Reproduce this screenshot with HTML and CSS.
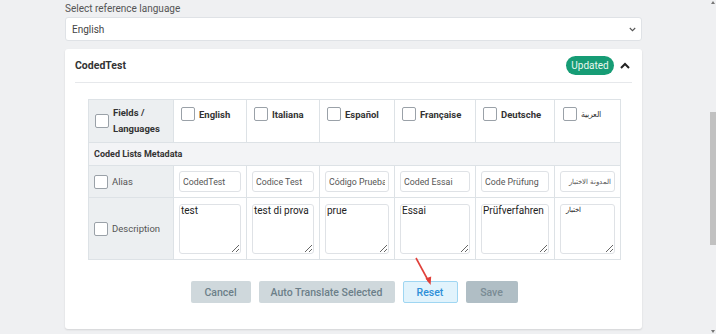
FILE: index.html
```html
<html>
<head>
<meta charset="UTF-8">
<title>Coded List Translation</title>
<link rel="stylesheet" href="styles.css">
</head>
<body>
<div class="page">
  <div class="reflabel">Select reference language</div>
  <div class="refselect">
    <span>English</span>
    <svg class="caret" width="7" height="5" viewBox="0 0 7 5"><path d="M0.8 1 L3.5 3.7 L6.2 1" fill="none" stroke="#555" stroke-width="1.1"/></svg>
  </div>

  <div class="card">
    <div class="cardhead">
      <span class="cardtitle">CodedTest</span>
      <span class="badge">Updated</span>
      <svg class="chev" width="10" height="7" viewBox="0 0 10 7"><path d="M1 6 L5 2 L9 6" fill="none" stroke="#222" stroke-width="2"/></svg>
    </div>

    <table class="grid">
      <colgroup>
        <col style="width:85px"><col style="width:73px"><col style="width:73px"><col style="width:75px"><col style="width:81px"><col style="width:79px"><col style="width:66px">
      </colgroup>
      <tr class="hrow">
        <th class="fcell first"><div class="fl"><span class="cb"></span><span>Fields /<br>Languages</span></div></th>
        <th><div class="lh"><span class="cb"></span>English</div></th>
        <th><div class="lh"><span class="cb"></span>Italiana</div></th>
        <th><div class="lh"><span class="cb"></span>Español</div></th>
        <th><div class="lh"><span class="cb"></span>Française</div></th>
        <th><div class="lh"><span class="cb"></span>Deutsche</div></th>
        <th><div class="lh ar"><span class="cb"></span>العربية</div></th>
      </tr>
      <tr class="srow">
        <td colspan="7">Coded Lists Metadata</td>
      </tr>
      <tr class="arow">
        <td class="fcell"><div class="fl"><span class="cb"></span>Alias</div></td>
        <td><input class="tin" value="CodedTest"></td>
        <td><input class="tin" value="Codice Test"></td>
        <td><input class="tin" value="Código Prueba"></td>
        <td><input class="tin" value="Coded Essai"></td>
        <td><input class="tin" value="Code Prüfung"></td>
        <td><input class="tin rtl" value="المدونة الاختبار"></td>
      </tr>
      <tr class="drow">
        <td class="fcell"><div class="fl"><span class="cb"></span>Description</div></td>
        <td><textarea class="tarea">test</textarea></td>
        <td><textarea class="tarea">test di prova</textarea></td>
        <td><textarea class="tarea">prue</textarea></td>
        <td><textarea class="tarea">Essai</textarea></td>
        <td><textarea class="tarea">Prüfverfahren</textarea></td>
        <td><textarea class="tarea ar">اختبار</textarea></td>
      </tr>
    </table>

    <div class="actions">
      <button class="btn grey">Cancel</button>
      <button class="btn grey">Auto Translate Selected</button>
      <button class="btn reset">Reset</button>
      <button class="btn save">Save</button>
    </div>
  </div>
</div>

<svg class="pointer" width="30" height="40" viewBox="0 0 30 40">
  <line x1="3" y1="2" x2="16" y2="26" stroke="#e0403a" stroke-width="1.6"/>
  <path d="M12.5 22.5 L17.6 29 L18.2 20.5 Z" fill="#e0403a"/>
</svg>

<div class="sbar">
  <span class="sup"></span>
  <span class="thumb"></span>
  <span class="sdown"></span>
</div>
</body>
</html>
```

FILE: styles.css
```css
html, body{
    margin:0;
    padding:0;
    background:#eff0f2;
    font-family:Roboto, "Liberation Sans", sans-serif;
    overflow:hidden;
}
.page{
    width:577px;
    margin-left:65px;
    padding-top:2px;
}
.reflabel{
    font-size:10px;
    color:#555;
    height:15px;
    line-height:13px;
}
.refselect{
    height:22px;
    background:#fff;
    border:1px solid #dfe2e6;
    border-radius:3px;
    display:flex;
    align-items:center;
    justify-content:space-between;
    padding:0 5px 0 6px;
    font-size:10px;
    color:#444;
}
.card{
    margin-top:8px;
    background:#fff;
    border-radius:3px;
    box-shadow:0 1px 2px rgba(0,0,0,0.12);
    padding:0 22px 26px 23px;
    height:254px;
}
.cardhead{
    margin:0 -12px 0 -13px;
    height:33px;
    border-bottom:1px solid #e6e8eb;
    display:flex;
    align-items:center;
}
.cardtitle{
    font-size:10.5px;
    font-weight:bold;
    color:#333;
    flex:1;
}
.badge{
    background:#169c75;
    color:#e8f8f0;
    font-size:10px;
    height:19px;
    line-height:19px;
    width:48px;
    text-align:center;
    border-radius:10px;
    margin-right:6px;
}
.chev{
    margin-right:2px;
}
.grid{
    margin-top:16px;
    width:532px;
    table-layout:fixed;
    border-collapse:collapse;
}
.grid th, .grid td{
    border:1px solid #dde2e6;
    padding:0;
}
.hrow{
    height:43px;
}
.hrow th{
    vertical-align:top;
    text-align:left;
}
.hrow th.first{
    vertical-align:middle;
}
.grid .fcell{
    background:#eceff1;
    padding:0;
}
.fl{
    display:flex;
    align-items:center;
    padding-left:5px;
    font-size:9.5px;
    color:#555;
}
.first .fl{
    padding-left:6px;
    font-size:9.5px;
    font-weight:bold;
    color:#333;
    line-height:16px;
}
.cb{
    width:12px;
    height:12px;
    border:1px solid #9aa1a8;
    border-radius:2px;
    background:#fff;
    margin-right:4px;
    flex:none;
}
.lh{
    display:flex;
    align-items:center;
    padding:7px 0 0 7px;
    font-size:9.5px;
    font-weight:bold;
    color:#333;
}
.lh.ar{
    font-weight:normal;
    font-size:7.5px;
    padding-left:8px;
}
.srow{
    height:23px;
    background:#f3f4f6;
}
.srow td{
    font-size:9px;
    font-weight:bold;
    color:#333;
    padding-left:5px;
}
.arow{
    height:32px;
}
.arow td{
    padding:0 5px;
}
.tin{
    width:100%;
    height:21px;
    box-sizing:border-box;
    border:1px solid #dfe2e6;
    border-radius:3px;
    font-family:Roboto, "Liberation Sans", sans-serif;
    font-size:8.8px;
    color:#555;
    padding:0 3px;
    display:block;
}
.tin.rtl{
    direction:rtl;
    font-size:7px;
    padding:0 3px;
}
.drow{
    height:62px;
}
.drow td{
    padding:0 5px;
}
.tarea{
    width:100%;
    height:50px;
    box-sizing:border-box;
    border:1px solid #dfe2e6;
    border-radius:3px;
    font-family:Roboto, "Liberation Sans", sans-serif;
    font-size:10px;
    color:#222;
    padding:0 1px;
    display:block;
    resize:vertical;
}
.tarea.ar{
    font-size:7px;
    padding:1px 5px;
}
.actions{
    margin-top:21px;
    display:flex;
    justify-content:center;
    gap:8px;
}
.btn{
    height:22px;
    border-radius:2px;
    border:1px solid transparent;
    font-family:Roboto, "Liberation Sans", sans-serif;
    font-size:10.5px;
    font-weight:500;
    padding:0;
}
.btn.grey{
    background:#cfd8dc;
    color:#6c7f89;
}
.btn.grey:first-child{
    width:60px;
}
.btn.grey:nth-child(2){
    width:136px;
}
.btn.reset{
    width:55px;
    background:#e1f3fc;
    border-color:#9fd6f2;
    color:#2e8fd8;
}
.btn.save{
    width:52px;
    background:#b0bec5;
    color:#7a8b94;
}
.pointer{
    position:absolute;
    left:413px;
    top:256px;
}
.sbar{
    position:absolute;
    right:0;
    top:0;
    width:6px;
    height:334px;
}
.thumb{
    position:absolute;
    left:0;
    top:112px;
    width:6px;
    height:133px;
    background:#c1c1c1;
}
.sup, .sdown{
    position:absolute;
    left:1px;
    width:0;
    height:0;
    border-left:2px solid transparent;
    border-right:2px solid transparent;
}
.sup{
    top:1px;
    border-bottom:3px solid #777;
}
.sdown{
    bottom:1px;
    border-top:3px solid #777;
}
```
